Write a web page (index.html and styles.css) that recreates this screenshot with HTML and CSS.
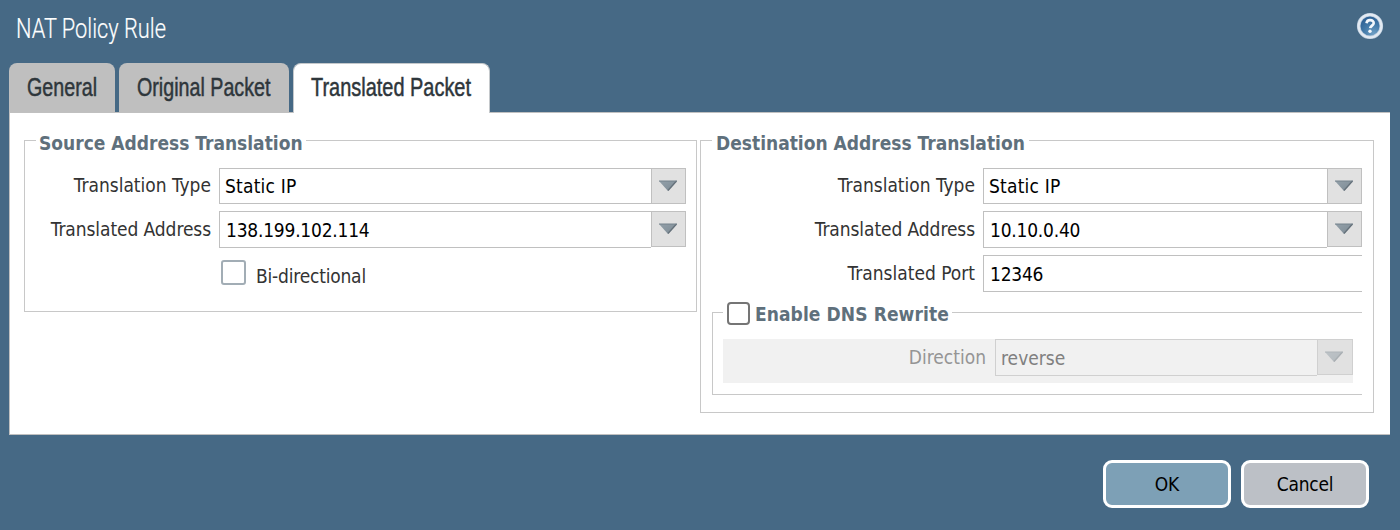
FILE: index.html
```html
<!DOCTYPE html>
<html lang="en">
<head>
<meta charset="utf-8">
<title>NAT Policy Rule</title>
<link rel="stylesheet" href="styles.css">
</head>
<body>
<svg width="0" height="0" class="defs" aria-hidden="true">
  <defs>
    <linearGradient id="arrowFill" x1="0" y1="0" x2="1" y2="1"><stop offset="0" stop-color="#93a0a9"/><stop offset="1" stop-color="#7d8b95"/></linearGradient>
    <radialGradient id="helpFill" cx=".65" cy=".85" r=".85"><stop offset="0" stop-color="#6f9fc4"/><stop offset=".5" stop-color="#437aa9"/><stop offset="1" stop-color="#285b90"/></radialGradient>
    <symbol id="arrow" viewBox="0 0 20 12"><path d="M1 1H19L10 11Z" fill="url(#arrowFill)"/><path d="M18.5 1L10 10.5" stroke="#65717a" stroke-width="1.3"/><path d="M1 1H19" stroke="#75828c"/></symbol>
  </defs>
</svg>
<div class="dialog">
  <header class="titlebar">
    <h1 class="title">NAT Policy Rule</h1>
    <svg class="help" width="28" height="28" viewBox="0 0 28 28"><circle cx="14" cy="14" r="11.3" fill="url(#helpFill)" stroke="#b9cbdd" stroke-width="3.6"/><circle cx="14" cy="14" r="11.4" fill="none" stroke="#e3eaf2" stroke-width="2.2"/><path d="M10.5 11.2C10.8 9 12.2 8 14.2 8.1C16.4 8.2 17.8 9.3 17.7 11.1C17.6 13.5 14.4 13.7 14.2 16.2" fill="none" stroke="#f4f8fc" stroke-width="2.6"/><circle cx="14" cy="19.3" r="1.7" fill="#f4f8fc"/></svg>
  </header>
  <nav class="tabs">
    <div class="tab general"><span>General</span></div>
    <div class="tab original"><span>Original Packet</span></div>
    <div class="tab translated active"><span>Translated Packet</span></div>
  </nav>
  <main class="panel">
    <fieldset class="group source">
      <legend><span>Source Address Translation</span></legend>
      <div class="row first"><label>Translation Type</label><div class="input"><span class="word">Static IP</span></div><div class="trigger"><svg width="20" height="12"><use href="#arrow"/></svg></div></div>
      <div class="row"><label class="tight">Translated Address</label><div class="input"><span class="digits">138.199.102.114</span></div><div class="trigger"><svg width="20" height="12"><use href="#arrow"/></svg></div></div>
      <div class="check-row"><i class="box"></i><span>Bi-directional</span></div>
    </fieldset>
    <fieldset class="group destination">
      <legend><span>Destination Address Translation</span></legend>
      <div class="row first"><label>Translation Type</label><div class="input"><span class="word">Static IP</span></div><div class="trigger"><svg width="20" height="12"><use href="#arrow"/></svg></div></div>
      <div class="row"><label class="tight">Translated Address</label><div class="input"><span class="digits">10.10.0.40</span></div><div class="trigger"><svg width="20" height="12"><use href="#arrow"/></svg></div></div>
      <div class="row"><label>Translated Port</label><div class="input"><span class="digits">12346</span></div></div>
      <fieldset class="dns">
        <legend><i class="native-box"></i><span>Enable DNS Rewrite</span></legend>
        <div class="disabled"><div class="row"><label>Direction</label><div class="input"><span>reverse</span></div><div class="trigger"><svg width="20" height="12"><use href="#arrow"/></svg></div></div></div>
      </fieldset>
    </fieldset>
  </main>
  <footer class="actions">
    <button class="ok">OK</button>
    <button class="cancel">Cancel</button>
  </footer>
</div>
</body>
</html>
```
FILE: styles.css
```css
* { box-sizing: border-box; }
body { margin: 0; background: #466985; font: 19px/22px "DejaVu Sans Condensed", "DejaVu Sans", sans-serif; font-stretch: condensed; color: #333; }
.defs { display: block; height: 0; }
.dialog { width: 1400px; height: 530px; overflow: hidden; }
.titlebar { display: flex; justify-content: space-between; height: 63px; padding: 12px 16px 0; }
.title { margin: 0; font: 300 27px/34px Roboto, sans-serif; color: #fff; transform: scaleX(.807); transform-origin: left; white-space: nowrap; -webkit-text-stroke: .2px #fff; }
.help { flex: none; }
.tabs { display: flex; gap: 4px; height: 49px; padding-left: 9px; }
.tab { height: 49px; padding-left: 18px; border-radius: 8px 8px 0 0; background: #bfbfbf; font: 26px/49px "Liberation Sans", sans-serif; color: #2e363b; white-space: nowrap; -webkit-text-stroke: .5px #2e363b; }
.tab span { display: inline-block; transform-origin: left; transform: scaleX(.757); }
.general { width: 106px; }
.original { width: 170px; }
.translated { width: 197px; }
.tab.active { height: 50px; background: #fff; border: 1px solid #c4c8cb; border-bottom: 0; padding-left: 17px; line-height: 47px; position: relative; }
.tab.active span { transform: scaleX(.767); }
.panel { display: flex; align-items: flex-start; gap: 3px; width: 1381px; height: 323px; margin-left: 9px; padding: 16px 15px 0 14px; background: #fff; border: 1px solid #c0c0c0; border-right: 0; }
fieldset { margin: 0; min-width: 0; border: 1px solid #c8c8c8; }
legend { display: flex; height: 23px; margin: 0; padding: 3px 0 0 3px; font-weight: 700; color: #5f707c; white-space: nowrap; }
.group { padding: 16px 10px 0 11px; }
.source { width: 673px; height: 183px; }
.destination { width: 674px; height: 284px; padding-right: 11px; }
.source > legend { width: 270px; }
.destination > legend { width: 317px; padding-left: 4px; }
.row { display: flex; height: 37px; margin-bottom: 7px; }
.row.first { height: 36px; }
label { flex: none; width: 183px; padding: 7px 8px 0 0; text-align: right; white-space: nowrap; }
.first label { padding-top: 6px; }
label.tight { letter-spacing: -.08px; }
.destination label { width: 271px; }
.input { flex: 1; border: 1px solid #c0c0c0; border-right: 0; padding: 8px 0 0 5px; color: #000; line-height: 21px; }
.first .input { padding-top: 7px; }
.word { letter-spacing: .2px; }
.digits { padding-left: 1px; letter-spacing: -.22px; }
.trigger { display: flex; align-items: center; justify-content: center; flex: none; width: 35px; height: 36px; padding-right: 2px; border: 1px solid #c0c0c0; background: #e1e1e1; }
.check-row { display: flex; gap: 10px; padding: 5px 0 0 185px; }
.check-row span { padding-top: 5px; letter-spacing: -.2px; }
.box { width: 25px; height: 25px; border: 2px solid #a2adb5; border-radius: 3px; background: #fff; }
.dns { width: 650px; height: 94px; margin-top: 9px; border-right: 0; padding: 15px 9px 0 10px; }
.dns > legend { width: 229px; padding: 0 0 0 4px; height: 23px; }
.dns > legend span { margin: 2px 0 0 5px; letter-spacing: .08px; }
.native-box { width: 23px; height: 23px; margin-top: 1px; border: 2px solid #757575; border-radius: 4px; background: #fff; }
.disabled { height: 44px; background: #f1f1f1; color: #959595; }
.disabled .input { color: #808080; border-color: #d0d0d0; }
.disabled .trigger { width: 36px; border-color: #d0d0d0; }
.disabled svg { opacity: .45; }
.destination .disabled label { width: 272px; padding-right: 9px; }
.actions { display: flex; justify-content: flex-end; gap: 10px; padding: 25px 31px 0 0; }
button { width: 128px; height: 48px; padding: 0; border: 3px solid #fff; border-radius: 9px; font: inherit; color: #000; letter-spacing: -.2px; }
.ok { background: #7da0b6; }
.cancel { background: #bcc0c6; }
```
